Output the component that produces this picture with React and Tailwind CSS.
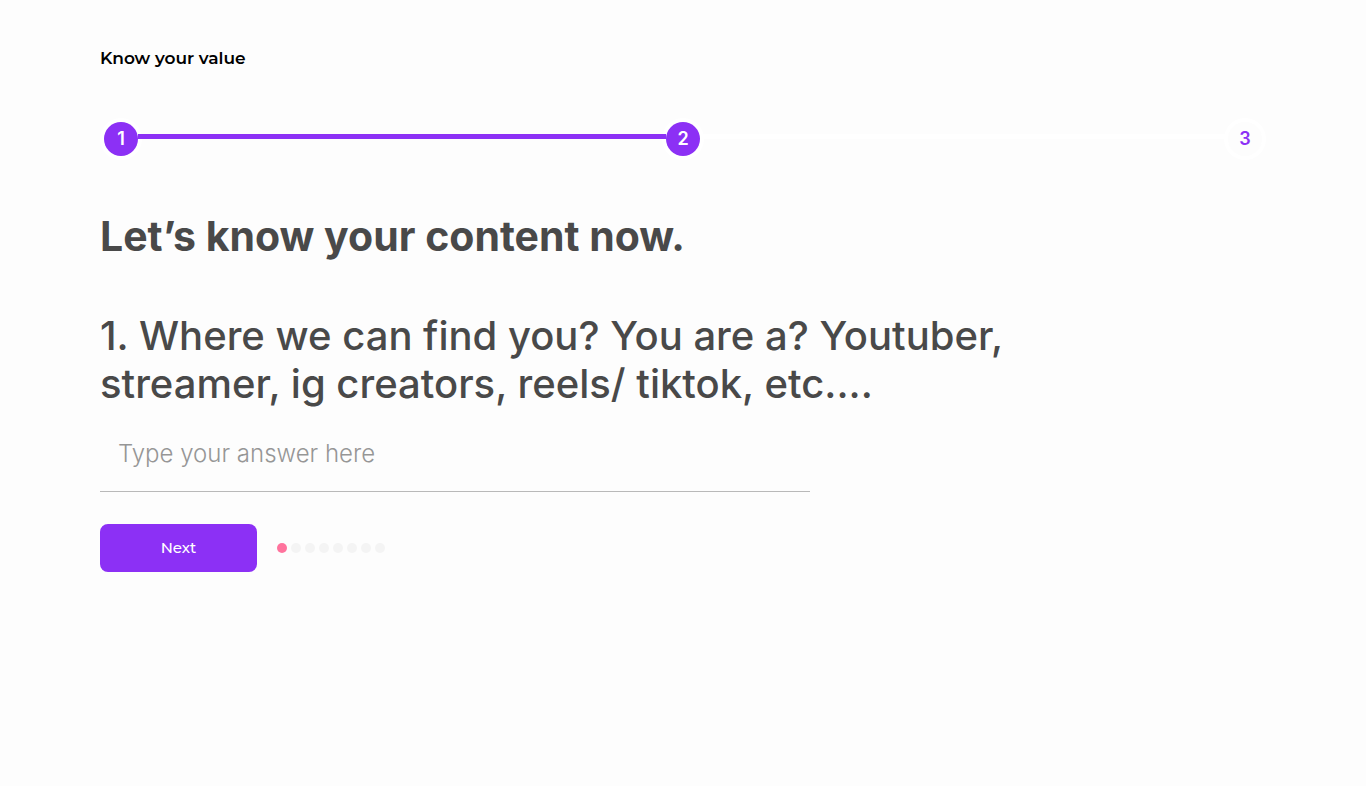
const purple = "bg-[#8c30f5]";

function Step({ n, done }) {
  return (
    <li
      aria-current={n === 2 ? "step" : undefined}
      className={`flex size-[34px] shrink-0 items-center justify-center rounded-full text-lg font-semibold ring-4 ring-white ${
        done ? `${purple} text-white` : "bg-[#fdfdfd] text-[#8c30f5]"
      }`}
    >
      {n}
    </li>
  );
}

export default function App() {
  return (
    <main className="min-h-screen bg-[#fdfdfd] px-[100px] pt-11 font-['Inter',sans-serif] text-[#494949]">
      <header className="font-['Montserrat','Inter',sans-serif] text-[17px] leading-7 font-semibold text-black">
        Know your value
      </header>
      <ol className="mx-1 mt-[50px] flex items-center">
        <Step n={1} done />
        <li aria-hidden="true" className={`relative -mt-[5px] h-[5px] flex-1 ${purple}`} />
        <Step n={2} done />
        <li aria-hidden="true" className="-mt-[5px] h-[5px] flex-1 bg-white" />
        <Step n={3} />
      </ol>
      <h1 className="mt-[55px] text-[41px] leading-[50px] font-bold">Let’s know your content now.</h1>
      <form onSubmit={(e) => e.preventDefault()}>
        <label htmlFor="answer" className="mt-[51px] block max-w-[930px] text-[40px] leading-12 font-medium">
          1. Where we can find you? You are a? Youtuber, streamer, ig creators, reels/ tiktok, etc....
        </label>
        <input
          id="answer"
          type="text"
          placeholder="Type your answer here"
          className="mt-2 block h-[76px] w-full max-w-[710px] border-b border-[#b9b9b9] bg-transparent px-[18px] text-2xl font-light outline-none placeholder:text-[#969696]"
        />
        <div className="mt-8 flex items-center gap-5">
          <button
            type="submit"
            className={`h-12 w-[157px] rounded-lg ${purple} font-['Montserrat','Inter',sans-serif] text-[15px] font-medium text-white`}
          >
            Next
          </button>
          <div className="flex gap-1" role="img" aria-label="Question 1 of 8">
            <span className="size-2.5 rounded-full bg-[#ff739d]" />
            {[2, 3, 4, 5, 6, 7, 8].map((n) => (
              <span key={n} className="size-2.5 rounded-full bg-[#f4f4f4]" />
            ))}
          </div>
        </div>
      </form>
    </main>
  );
}
